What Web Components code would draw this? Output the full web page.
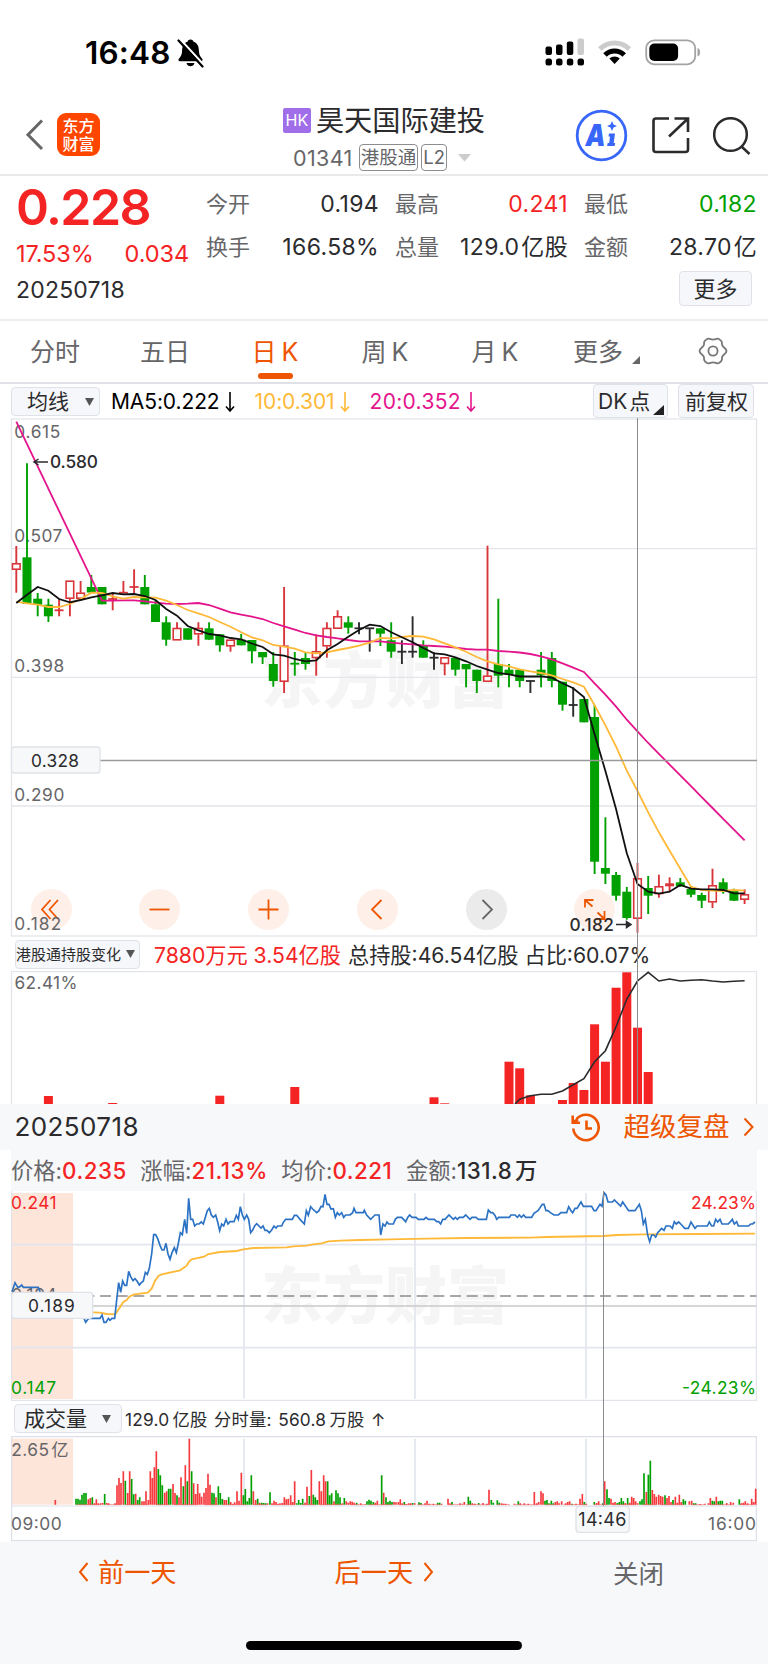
<!DOCTYPE html>
<html lang="zh-CN">
<head>
<meta charset="utf-8">
<meta name="viewport" content="width=device-width">
<title>昊天国际建投 01341</title>
<style>
  body {
    margin: 0;
    width: 768px;
    height: 1665px;
    overflow: hidden;
    background: #fff;
    color: #2b2b2e;
    font-family: Inter, "Noto Sans CJK SC", sans-serif;
    font-size: 22px;
    --up: #f42424;
    --down: #00a000;
    --accent: #ee5500;
    --muted: #666669;
    --sheet: #f7f8fa;
  }
</style>
</head>
<body>
<stock-app></stock-app>

<script>
// Small helper: one template per element, cloned in its shadow root
function element(name, html, setup) {
  const template = document.createElement('template');
  template.innerHTML = html;
  customElements.define(name, class extends HTMLElement {
    connectedCallback() {
      if (this.shadowRoot) return;
      this.attachShadow({ mode: 'open' }).appendChild(template.content.cloneNode(true));
      if (setup) setup(this, this.shadowRoot);
    }
  });
}

/* ---------- status bar ---------- */
element('status-bar', `
  <style>
    :host { display: flex; height: 104px; box-sizing: border-box; padding: 1px 67px 0 85px; justify-content: space-between; align-items: center; color: #000; }
    .side { display: flex; align-items: center; }
    .time { font-size: 31.500px; font-weight: 600; letter-spacing: .2px; line-height: 40px; margin-right: 6px; }
    svg { display: block; }
  </style>
  <div class="side">
    <span class="time">16:48</span>
    <svg width="27" height="30" viewBox="0 0 27 30">
      <path d="M13.5 1.5c2 0 2.6 1 3 2.2 4 1.3 5.3 4.7 5.4 9 .1 4 1.500 6 3.400 8.300.8 1-.1 2.200-1.100 2.200H2.800c-1 0-1.900-1.200-1.100-2.200 2-2.400 3.300-4.300 3.400-8.300.1-4.300 1.500-7.700 5.400-9 .4-1.200 1-2.200 3-2.200z M9.500 25h8c-.7 2.200-2 3.200-4 3.200s-3.300-1-4-3.200z"/>
      <path d="M3.400 1.500l24 26" stroke="#fff" stroke-width="2.200"/>
      <path d="M1.500 2.500l24 26" stroke="#000" stroke-width="2.200" stroke-linecap="round"/>
    </svg>
  </div>
  <svg width="156" height="30" viewBox="545 37.500 156 30">
    <g>
      <rect x="545.500" y="46" width="6.500" height="8.500" rx="2"/><rect x="556" y="44" width="6.500" height="10.500" rx="2"/>
      <rect x="566.800" y="41" width="6.500" height="13.500" rx="2"/><rect x="577.500" y="38" width="6.500" height="16.500" rx="2" fill="#ccc"/>
      <rect x="545.500" y="58" width="6.500" height="7" rx="2.500"/><rect x="556" y="58" width="6.500" height="7" rx="2.500"/>
      <rect x="566.800" y="58" width="6.500" height="7" rx="2.500"/><rect x="577.500" y="58" width="6.500" height="7" rx="2.500"/>
    </g>
    <g fill="none" stroke-width="5">
      <path d="M599.800 48.500a21 21 0 0 1 29.600 0" stroke="#ccc"/>
      <path d="M605 54.500a13.500 13.500 0 0 1 19.200 0" stroke="#000"/>
    </g>
    <path d="M614.600 63.500l-5.200-5.400a7.500 7.500 0 0 1 10.400 0z"/>
    <rect x="646.200" y="39.800" width="49" height="24" rx="8" fill="none" stroke="#a3a3a3" stroke-width="1.800"/>
    <rect x="649.300" y="43" width="28.800" height="17.500" rx="5"/>
    <path d="M697.500 47.500c3.500 1 3.500 7.500 0 8.600z" fill="#a3a3a3"/>
  </svg>
`);

/* ---------- title bar ---------- */
element('stock-header', `
  <style>
    :host { display: grid; grid-template-columns: 1fr auto 1fr; height: 72px; box-sizing: border-box; border-bottom: 2px solid #e9e9eb; align-items: start; }
    svg { display: block; }
    .left { display: flex; align-items: center; padding: 9px 0 0 25px; gap: 13px; }
    .logo { width: 43px; height: 43px; border-radius: 9px; background: #ff4600; color: #fff; font: 500 16px/18px "Noto Sans CJK SC", sans-serif; text-align: center; padding-top: 3px; box-sizing: border-box; }
    .name { display: flex; align-items: center; gap: 5px; font-size: 28.200px; line-height: 34px; height: 33px; justify-content: center; }
    .hk { background: #a06ee8; color: #fff; font-size: 16px; line-height: 25px; width: 28px; text-align: center; border-radius: 2px; }
    .code { display: flex; align-items: center; justify-content: center; color: var(--muted); font-size: 21.500px; gap: 3px; height: 41px; letter-spacing: .4px; margin-left: -3px; }
    .code b { font-weight: 400; border: 1.500px solid #8d8d90; border-radius: 4px; font-size: 18.500px; line-height: 25px; padding: 0 1px; letter-spacing: 0; }
    .code b:first-of-type { margin-left: 3px; }
    .code svg { margin-left: 8px; }
    .right { display: flex; justify-content: flex-end; padding: 5px 17px 0 0; align-items: center; gap: 24px; }
    .right svg:last-child { margin-left: -1px; }
  </style>
  <div class="left">
    <svg width="19" height="32" viewBox="0 0 19 32"><path d="M17 1.500L3 15.700 17 30" fill="none" stroke="#666" stroke-width="3"/></svg>
    <div class="logo">东方<br>财富</div>
  </div>
  <div>
    <div class="name"><span class="hk">HK</span><span>昊天国际建投</span></div>
    <div class="code"><span>01341</span><b>港股通</b><b>L2</b>
      <svg width="14" height="8"><path d="M0 0h13L6.500 7.500z" fill="#ccc"/></svg></div>
  </div>
  <div class="right">
    <svg width="53" height="53" viewBox="575.500 109 53 53">
      <circle cx="602" cy="135.500" r="24.300" fill="none" stroke="#3866f8" stroke-width="2.800"/>
      <text x="586" y="146" font-family="Inter" font-size="30" font-weight="900" font-style="italic" fill="#3866f8" textLength="20" lengthAdjust="spacingAndGlyphs">A</text>
      <path d="M612.500 121l1.500 3.500 3.500 1.500-3.500 1.500-1.500 3.500-1.500-3.500-3.500-1.500 3.500-1.500z" fill="#3866f8"/>
      <path d="M609.500 133.500h6l-1.300 9.500h1.500l-.6 3h-7.500l.6-3h1.500l.8-6.500h-1.500z" fill="#3866f8"/>
    </svg>
    <svg width="38" height="38" viewBox="651 117.500 38 38" fill="none" stroke="#2b2b2e" stroke-width="2.600">
      <path d="M668 119H655q-2.500 0-2.500 2.500v28.500q0 2.500 2.500 2.500h29.500q2.500 0 2.500-2.500V138.500M673.500 119H687v13.500M687 119l-19 18"/>
    </svg>
    <svg width="38" height="38" viewBox="713 116 38 38" fill="none" stroke="#2b2b2e" stroke-width="2.500">
      <circle cx="730.500" cy="133.500" r="16.300"/><path d="M741.500 145.500l8 7.500"/>
    </svg>
  </div>
`);

/* ---------- quote ---------- */
element('quote-cell', `
  <style>
    :host { display: flex; justify-content: space-between; line-height: 30px; font-size: 22px; white-space: nowrap; }
    .label { color: var(--muted); }
    .value { font-size: 23px; letter-spacing: .35px; word-spacing: -5px; margin-right: -1px; }
  </style>
  <span class="label"></span><span class="value"><slot></slot></span>
`, (host, root) => {
  root.querySelector('.label').textContent = host.getAttribute('label');
});

element('quote-panel', `
  <style>
    :host { display: flex; height: 145px; box-sizing: border-box; border-bottom: 2px solid #eeeef0; padding: 11px 12px 0 16px; }
    .main { width: 190px; box-sizing: border-box; padding-right: 17px; color: var(--up); }
    .price { font-size: 50px; line-height: 40px; font-weight: 600; letter-spacing: -1.600px; }
    .diff { display: flex; justify-content: space-between; font-size: 23.500px; line-height: 30px; margin-top: 12px; letter-spacing: -.1px; }
    .date { color: #2b2b2e; font-size: 23px; line-height: 30px; margin-top: 6px; letter-spacing: .2px; }
    .more { flex: 1; }
    .grid { display: grid; grid-template-columns: repeat(3, 172px); gap: 13px 17px; padding-top: 2px; }
    .up { color: var(--up); }
    .down { color: var(--down); }
    button { display: block; margin: 9px 4px 0 auto; width: 73px; height: 35px; box-sizing: border-box; border: 1.500px solid #dfe2e8; border-radius: 4px; background: #f6f7fa; font: inherit; color: inherit; line-height: 30px; padding: 0; }
  </style>
  <div class="main">
    <div class="price">0.228</div>
    <div class="diff"><span>17.53%</span><span>0.034</span></div>
    <div class="date">20250718</div>
  </div>
  <div class="more">
    <div class="grid">
      <quote-cell label="今开">0.194</quote-cell>
      <quote-cell label="最高"><span class="up">0.241</span></quote-cell>
      <quote-cell label="最低"><span class="down">0.182</span></quote-cell>
      <quote-cell label="换手">166.58%</quote-cell>
      <quote-cell label="总量">129.0 亿股</quote-cell>
      <quote-cell label="金额">28.70 亿</quote-cell>
    </div>
    <button>更多</button>
  </div>
`);

/* ---------- period tabs ---------- */
element('period-tab', `
  <style>
    :host { display: flex; flex: none; flex-direction: column; align-items: center; width: 110px; color: var(--muted); font-size: 25px; word-spacing: -2px; line-height: 36px; padding-top: 13px; box-sizing: border-box; }
    :host([active]) { color: var(--accent); }
    :host([active])::after { content: ""; width: 35px; height: 6px; border-radius: 3px; background: var(--accent); margin-top: 3px; }
  </style>
  <span><slot></slot></span>
`);

element('period-tabs', `
  <style>
    :host { display: flex; height: 63px; box-sizing: border-box; border-bottom: 2px solid #dfe1e7; }
    .corner { display: inline-block; margin-left: 9px; vertical-align: -3px; }
    .gear { width: 105px; padding: 16px 0 0 35px; box-sizing: border-box; }
    period-tab:last-of-type { width: 113px; }
  </style>
  <period-tab>分时</period-tab>
  <period-tab>五日</period-tab>
  <period-tab active>日 K</period-tab>
  <period-tab>周 K</period-tab>
  <period-tab>月 K</period-tab>
  <period-tab>更多<svg class="corner" width="8" height="8"><path d="M8 0v8H0z" fill="#666"/></svg></period-tab>
  <div class="gear">
    <svg width="30" height="28" viewBox="0 0 30 28" fill="none" stroke="#77777a" stroke-width="1.800">
      <path d="M8.800 2.200C10.500 .6 11.500 2.600 15 2.600S19.500 .6 21.200 2.200C24 4 24 5 24 7.500S28.500 11 28.500 14 24 18 24 20.500 24 24 21.200 25.800C19.500 27.400 18.500 25.400 15 25.400S10.500 27.400 8.800 25.800C6 24 6 23 6 20.500S1.500 17 1.500 14 6 10 6 7.500 6 4 8.800 2.200Z"/>
      <circle cx="15" cy="14" r="4.600"/>
    </svg>
  </div>
`);

/* ---------- small grey chips ---------- */
element('tool-chip', `
  <style>
    :host { display: flex; align-items: center; justify-content: space-between; box-sizing: border-box; border: 1.500px solid #dfe2e8; border-radius: 4px; background: #f6f7fa; white-space: nowrap; font-size: 21px; line-height: 1; }
    svg { display: none; }
    :host([arrow]) svg { display: block; }
  </style>
  <slot></slot><svg width="9" height="8"><path d="M0 0h9L4.500 8z" fill="#555"/></svg>
`);

element('ma-bar', `
  <style>
    :host { display: flex; align-items: flex-start; height: 34px; padding: 0 14px 0 11px; font-size: 21px; }
    .first { width: 89px; height: 29px; margin-top: 3px; padding: 0 5px 0 15px; }
    .ma { line-height: 35px; margin-left: 11px; display: flex; align-items: center; gap: 5px; letter-spacing: -.1px; }
    .ma + .ma { margin-left: 20px; }
    .ma + .ma + .ma { letter-spacing: .3px; }
    .fill { flex: 1; }
    .dk { width: 75px; height: 34px; padding: 0 3px 0 4px; word-spacing: -4px; }
    .fq { width: 76px; height: 34px; padding: 0 6px; margin-left: 10px; }
    .corner { align-self: flex-end; margin-bottom: 2px; }
  </style>
  <tool-chip class="first" arrow>均线</tool-chip>
  <span class="ma" style="color:#000">MA5:0.222<svg width="10" height="20" viewBox="0 0 10 20" fill="none" stroke="currentColor" stroke-width="1.600"><path d="M5 0v19M1 14.500l4 4.500 4-4.500"/></svg></span>
  <span class="ma" style="color:#ffb938">10:0.301<svg width="10" height="20" viewBox="0 0 10 20" fill="none" stroke="currentColor" stroke-width="1.600"><path d="M5 0v19M1 14.500l4 4.500 4-4.500"/></svg></span>
  <span class="ma" style="color:#e4158c">20:0.352<svg width="10" height="20" viewBox="0 0 10 20" fill="none" stroke="currentColor" stroke-width="1.600"><path d="M5 0v19M1 14.500l4 4.500 4-4.500"/></svg></span>
  <span class="fill"></span>
  <tool-chip class="dk"><span>DK 点</span><svg class="corner" width="11" height="10"><path d="M11 0v10H0z" fill="#222"/></svg></tool-chip>
  <tool-chip class="fq">前复权</tool-chip>
`);

/* ---------- round chart buttons ---------- */
element('round-button', `
  <style>
    :host { display: block; width: 41px; height: 41px; border-radius: 50%; background: #fef0e9; color: var(--accent); }
    :host([off]) { background: #ebebeb; color: var(--muted); }
    svg { display: block; }
  </style>
  <svg width="41" height="41" viewBox="-20.500 -20.500 41 41" fill="none" stroke="currentColor" stroke-width="1.800"><path/></svg>
`, (host, root) => {
  root.querySelector('path').setAttribute('d', host.getAttribute('icon'));
});

/* ---------- daily candles ---------- */
const STEP = 10.71, X0 = 16.3;
const cx = i => +(X0 + STEP * i).toFixed(1);
const polyline = (ys, from = 0) => ys.map((y, i) => cx(i + from) + ',' + y).join(' ');

// colour, high, body top, body bottom, low
const CANDLES = [
  'r 546 563.3 569.7 592.7', 'g 463.3 557.3 604 604', 'g 593 598.7 604.7 616.3', 'g 598.7 604.7 616.3 622', 'r 598.7 610.3 610.3 616.3',
  'r 580.7 580.7 598.7 616.3', 'r 581 592.7 598.7 598.7', 'g 575 587 592.5 592.7', 'g 587 587 604.3 604.3', 'r 593 599 599 610.3',
  'r 581 592.7 592.7 593.3', 'r 569.3 587 587 593', 'g 575 587 604.3 604.3', 'g 600 604.3 622 622', 'g 616.3 622.3 639.7 645.7',
  'r 622.3 628 640.3 640.3', 'g 628.3 628.3 639.7 639.7', 'r 622.3 628 634.3 645.7', 'g 622.3 628.3 639.7 639.7', 'g 634.3 634.3 645.3 651.7',
  'r 639.7 639.7 646.3 651.7', 'g 634 639.7 645.3 645.3', 'g 640 640 651.3 663.3', 'g 652 652 657.3 664', 'g 652 664 681 686.7',
  'r 587 645.7 681.7 693', 'g 652 663.7 663.7 675.7', 'g 653 658 664 669.7', 'r 634.3 651.3 658 675.7', 'r 622.3 628 646.3 657.7',
  'r 610.3 616.3 628.7 628.7', 'g 616.3 622.3 627.7 633.7', 'k 622.3 628.3 628.3 634.3', 'k 628.3 628.3 628.3 651.7', 'g 628.3 628.3 633.7 646',
  'g 622.3 640.3 651.7 657.7', 'k 640.3 651.7 651.7 664', 'k 616.3 651.7 651.7 657.7', 'g 640.3 646 657.7 657.7', 'k 652.3 657.7 657.7 669.7',
  'r 657.3 657.3 664 675.3', 'g 658 658 669.7 675.7', 'g 664 664 669.3 687.3', 'g 669.7 669.7 681 693', 'r 545.7 675.7 681.7 681.7',
  'g 598.7 664 675.7 687.3', 'g 664 669.7 674.7 687.3', 'g 669.7 669.7 681 687.3', 'k 681 681 681 693', 'g 652 669.7 675.3 687.3',
  'g 652 658 681 687.3', 'g 681.7 681.7 704.7 710.7', 'k 687.3 705 705 716.7', 'g 699 699 722.3 722.3', 'g 705 717 861.7 874',
  'g 817.3 868 873.7 884', 'g 872 875 895.7 900.7', 'g 887 891.7 918 919.7', 'r 863 878.3 918.7 932.7', 'g 876 888 895.7 914',
  'r 874.7 886.3 894 897.7', 'r 877.3 884.8 884.8 892', 'g 878 882.3 886.3 887', 'g 886 889 894.7 897.3', 'g 892.7 895 900.7 908',
  'r 868.7 885.3 902.3 908', 'g 878.3 882.3 890 893.7', 'g 888.7 890 900.7 901', 'r 889.3 894.3 899.7 904'
];
const MA5 = [603, 594.7, 587, 590.7, 599, 602.3, 600, 597.3, 595.3, 593, 594.3, 594, 596, 600, 609, 615.7, 626, 630.3, 634, 635.3, 638, 639.3, 643.5, 647, 654.3, 655.7, 659, 661.3, 660.3, 650.3, 644, 636.7, 630, 624.7, 626, 632.3, 637.3, 642.3, 648, 653.3, 654.3, 657.3, 661.3, 666, 669.7, 673, 674.3, 676.5, 676.5, 676.3, 677.7, 683.3, 688.3, 697, 734.3, 771, 809.3, 853.3, 884, 891.7, 893.7, 891.7, 885, 888.7, 889.3, 889.3, 890, 893.3, 893.3];
const MA10 = [601.7, 603.3, 604.7, 607, 607, 604, 599, 592.7, 593, 596.3, 598.7, 597, 597.3, 597.7, 600.7, 605, 610, 613.3, 617, 622, 626.7, 632.3, 637.3, 640.3, 645, 646.7, 648.7, 652.3, 653.3, 652.3, 650, 648, 645.7, 642.7, 638, 638.3, 637, 636, 636.7, 639.3, 643.3, 647.3, 651.7, 657, 661.3, 664.3, 666.3, 669.3, 671.3, 673, 675.3, 679, 682.3, 686.7, 705.3, 725.3, 746.7, 770.7, 791, 812.3, 832.3, 850.7, 868.7, 886.7, 890, 890.7, 891, 890, 890.7];
const MA20 = [600.7, 600.7, 600.3, 600.3, 601.3, 602.7, 603.7, 604, 603.7, 603, 605, 608.7, 612.3, 614.7, 616.7, 619, 623, 626.3, 629.7, 633, 635.3, 637, 638.3, 640, 641.3, 641.3, 641.3, 642.7, 643.7, 644.3, 645.3, 646, 646.7, 647.7, 649, 649.7, 649.7, 651, 651.7, 652.5, 654, 656.3, 659.3, 663.3, 667.7, 672, 683.3, 694.7, 706.7, 719.7, 731.3, 743, 753.8, 764.6, 775.4, 786.2, 797.1, 808, 818.8, 829.6, 840.3];

function candle(row, i) {
  const [c, hi, top, bot, lo] = row.split(' ').map((v, n) => n ? +v : v);
  const color = { r: '#d9363b', g: '#00a000', k: '#2b2b2e' }[c];
  const x = cx(i);
  const wick = (a, b) => b > a ? `<path d="M${x} ${a}V${b}" stroke="${color}" stroke-width="1.9"/>` : '';
  if (top === bot) {
    return wick(hi, lo) + `<path d="M${x - 4.5} ${top}h9" stroke="${color}" stroke-width="${i === 61 ? 3 : 1.8}"/>`;
  }
  if (c === 'r') {
    return wick(hi, top) + wick(bot, lo) +
      `<rect x="${x - 3.8}" y="${top + .5}" width="7.6" height="${bot - top - 1}" fill="#fff" stroke="${color}" stroke-width="1.6"/>`;
  }
  return wick(hi, lo) + `<rect x="${x - 4.5}" y="${top}" width="9" height="${bot - top}" fill="${color}"/>`;
}

element('candle-chart', `
  <style>
    :host { display: block; position: relative; height: 519px; }
    svg { display: block; position: relative; }
    .buttons { position: absolute; left: 30.500px; top: 471px; width: 585px; display: flex; justify-content: space-between; }
    text { font-size: 17.300px; fill: var(--muted); }
    .mark { fill: #2b2b2e; font-weight: 500; }
    .logo { font-size: 61px; font-weight: 900; fill: #f5f5f6; }
  </style>
  <div class="buttons">
    <round-button icon="M-1-9.500L-9.500 0L-1 9.500M6.500-9.500L-2 0L6.500 9.500"></round-button>
    <round-button icon="M-10 0H10"></round-button>
    <round-button icon="M-10 0H10M0-10V10"></round-button>
    <round-button icon="M4-9.500L-5.500 0L4 9.500"></round-button>
    <round-button off icon="M-4-9.500L5.500 0L-4 9.500"></round-button>
    <round-button icon="M-9.500-2V-9.500H-1M-9.500-9.500L-2-3M3 3L10 9.500M1.500 9.500H10V1.500"></round-button>
  </div>
  <svg width="768" height="519" viewBox="0 418 768 519">
    <text class="logo" x="261" y="703" textLength="248">东方财富</text>
    <g stroke="#e3e5ea" stroke-width="1.300" fill="none">
      <rect x="11.500" y="419" width="745" height="517"/>
      <path d="M11.500 548.700h745M11.500 677.300h745M11.500 806h745"/>
    </g>
    <text x="14.300" y="438" textLength="46">0.615</text><text x="14.300" y="542" textLength="48">0.507</text>
    <text x="14.300" y="671.500" textLength="50">0.398</text><text x="14.300" y="800.500" textLength="50">0.290</text>
    <text x="14.300" y="930" textLength="47">0.182</text>
    <g id="candles"></g>
    <g fill="none" stroke-width="1.800">
      <polyline id="ma20" stroke="#e4158c"/><polyline id="ma10" stroke="#ffb938"/><polyline id="ma5" stroke="#111"/>
    </g>
    <path d="M11 760.500h746" stroke="#9a9a9a" stroke-width="1.300"/>
    <rect x="11.500" y="747" width="88.500" height="26" rx="3" fill="#f7f8fa" stroke="#dfe2e8" stroke-width="1.300"/>
    <text x="31" y="767" textLength="48" style="fill:#2b2b2e">0.328</text>
    <path d="M34 462h14M38.500 459l-4.500 3 4.500 3" stroke="#2b2b2e" stroke-width="1.500" fill="none"/>
    <text class="mark" x="50" y="468.300" textLength="48">0.580</text>
    <text class="mark" x="569.500" y="931" textLength="44.500">0.182</text>
    <path d="M616 924.500h14M626.500 921.500l4.500 3-4.500 3z" stroke="#2b2b2e" stroke-width="1.500" fill="#2b2b2e"/>
  </svg>
`, (host, root) => {
  root.getElementById('candles').innerHTML = CANDLES.map(candle).join('');
  root.getElementById('ma5').setAttribute('points', polyline(MA5));
  root.getElementById('ma10').setAttribute('points', polyline(MA10));
  root.getElementById('ma20').setAttribute('points', cx(0) + ',421.7 ' + polyline(MA20, 8));
});

/* ---------- holdings ---------- */
const HOLD = { 3: 1096, 9: 1103, 19: 1095.7, 26: 1087, 39: 1097.3, 40: 1103.3, 46: 1061.7, 47: 1068.3, 48: 1095.3, 51: 1100, 52: 1083, 53: 1090, 54: 1024.3, 55: 1061.7, 56: 987.7, 57: 972.3, 58: 1027.7, 59: 1072 };
const RATIO = [1099.3, 1095.7, 1094.3, 1094.3, 1091, 1084.7, 1078.7, 1061.7, 1050.7, 1026.7, 999, 981, 972.3, 981, 979, 981, 980.3, 979.7, 981, 982, 981.3, 980.7];

element('hold-panel', `
  <style>
    :host { display: block; }
    .bar { display: flex; align-items: center; height: 34px; padding-left: 15px; font-size: 21.200px; white-space: nowrap; }
    tool-chip { width: 125px; height: 29px; font-size: 15px; padding: 0 4px 0 0; }
    .bar span { position: relative; top: -1px; }
    .up { color: var(--up); margin: 0 7px 0 14px; }
    svg { display: block; }
    text { font-size: 17.300px; fill: var(--muted); }
  </style>
  <div class="bar">
    <tool-chip arrow>港股通持股变化</tool-chip>
    <span class="up">7880万元 3.54亿股</span>
    <span>总持股:46.54亿股 占比:60.07%</span>
  </div>
  <svg width="768" height="133" viewBox="0 971 768 133">
    <path d="M11.500 1104V971.700h745V1104" fill="none" stroke="#e3e5ea" stroke-width="1.300"/>
    <text x="14.500" y="989" textLength="63">62.41%</text>
    <g id="bars" fill="#f42424"></g>
    <polyline id="ratio" fill="none" stroke="#2b2b2e" stroke-width="1.600"/>
  </svg>
`, (host, root) => {
  root.getElementById('bars').innerHTML = Object.entries(HOLD)
    .map(([i, y]) => `<rect x="${cx(i) - 4.5}" y="${y}" width="9" height="${1104 - y}"/>`).join('');
  root.getElementById('ratio').setAttribute('points', '515,1104 ' + polyline(RATIO, 47));
});

/* ---------- replay sheet ---------- */
element('replay-head', `
  <style>
    :host { display: block; }
    .title { display: flex; align-items: center; height: 46px; background: var(--sheet); padding: 0 14.500px; font-size: 26px; line-height: 42px; }
    .title b { flex: 1; font-weight: 400; letter-spacing: .4px; }
    .link { color: var(--accent); font-size: 26.500px; margin: -2px 13px 0 24px; }
    .info { display: flex; height: 41px; align-items: center; margin: 0 11px; background: var(--sheet); font-size: 22.300px; line-height: 37px; color: var(--muted); white-space: nowrap; }
    .info span { margin-right: 13.500px; word-spacing: -4px; }
    i { font-style: normal; color: var(--up); font-weight: 500; letter-spacing: .55px; }
    i.flat { color: #2b2b2e; }
  </style>
  <div class="title">
    <b>20250718</b>
    <svg width="29" height="29" viewBox="-15 -14.500 29 29" fill="none" stroke="#ee5500" stroke-width="2.600">
      <path d="M-9.600-8.400A12.700 12.700 0 1 1-12.700 1M-13.300-12V-4.800H-6M-13-5.500L-8-8M0.500-7V1H6"/>
    </svg>
    <span class="link">超级复盘</span>
    <svg width="11" height="20" viewBox="0 0 11 20" fill="none" stroke="#ee5500" stroke-width="2"><path d="M1.500 1.500L9.500 10l-8 8.500"/></svg>
  </div>
  <div class="info">
    <span>价格:<i>0.235</i></span><span>涨幅:<i>21.13%</i></span><span>均价:<i>0.221</i></span><span>金额:<i class="flat">131.8 万</i></span>
  </div>
`);

// Intraday drawings use three units per pixel
const PRICE_OPEN = '36,575 45,548 53,562 60,560 65,555 70,562 115,562 122,580';
const PRICE = `242,655 250,650 257,667 266,655 300,655 306,645 312,667 318,667 325,655 330,661 336,655 344,655 350,600 356,548 362,577 368,543 374,556 380,556 386,514 392,530 399,542 405,536 411,543 418,555 424,548 430,543 436,517 442,523 448,505 455,462 461,404 467,404 473,416 480,436 486,450 492,450 498,430 504,462 510,478 516,458 523,443 529,458 535,430 541,398 547,404 554,358 560,400 566,295 572,358 578,358 584,378 590,372 597,372 604,366 610,372 616,352 622,332 628,325 634,345 640,352 647,345 653,366 659,392 665,372 671,378 678,358 684,372 690,365 702,365 709,346 715,358 721,320 727,345 733,358 740,345 746,358 752,398 758,390 764,378 770,371 777,378 783,384 789,378 795,391 801,391 808,398 815,390 822,378 828,384 833,378 845,378 850,367 857,358 877,358 883,346 890,346 900,358 913,372 919,332 925,346 932,320 938,327 950,338 957,332 963,319 969,320 975,283 981,313 987,313 993,327 1000,326 1006,352 1012,338 1018,345 1025,338 1031,352 1037,345 1050,345 1058,338 1062,325 1068,338 1090,338 1093,331 1100,345 1112,358 1125,345 1137,345 1142,405 1149,372 1155,378 1161,366 1166,372 1180,372 1186,358 1192,352 1205,352 1217,365 1223,352 1229,345 1236,352 1248,352 1255,358 1272,358 1278,352 1285,358 1303,358 1310,365 1316,365 1322,372 1328,358 1335,358 1347,345 1360,358 1366,352 1372,358 1378,352 1390,352 1397,345 1410,358 1416,352 1428,352 1435,358 1459,358 1465,330 1472,338 1478,338 1485,346 1490,358 1496,352 1528,352 1533,345 1545,345 1552,352 1558,345 1564,352 1571,345 1577,352 1595,352 1602,340 1614,332 1627,313 1632,313 1638,332 1644,332 1651,338 1662,345 1675,345 1683,338 1700,338 1706,320 1713,332 1718,338 1725,325 1731,325 1743,306 1750,319 1775,319 1782,332 1788,332 1800,313 1806,319 1812,278 1818,285 1824,306 1837,306 1843,300 1862,318 1868,306 1886,332 1905,332 1918,313 1924,332 1930,372 1936,358 1943,405 1949,425 1955,405 1961,405 1967,411 1973,398 1985,385 1992,391 1998,378 2010,378 2017,385 2023,365 2029,372 2036,366 2048,378 2054,385 2065,385 2073,366 2085,385 2091,378 2122,378 2128,366 2135,378 2141,378 2147,358 2153,366 2160,358 2166,372 2185,372 2197,358 2203,372 2210,365 2215,378 2246,378 2252,372 2258,372 2265,366`;
const AVERAGE = '278,637 300,638 320,642 346,643 360,622 370,606 380,600 388,590 400,584 443,578 455,566 465,543 475,528 485,523 540,511 560,497 567,485 575,478 612,470 625,462 660,456 710,453 730,448 760,444 860,442 880,439 920,437 940,433 965,430 985,424 1020,422 1080,420 1170,418 1280,416 1400,414 1590,413 1640,411 1810,408 1850,405 1930,403 2100,402 2265,401';

element('minute-chart', `
  <style>
    :host { display: block; height: 210px; }
    svg { display: block; }
    text { font-size: 52px; fill: var(--muted); }
    .up { fill: var(--up); }
    .down { fill: var(--down); }
    .logo { font-size: 186px; font-weight: 900; fill: #f5f5f6; }
  </style>
  <svg width="768" height="210" viewBox="0 273 2304 630">
    <rect x="36" y="279" width="183" height="618" fill="#fde5da"/>
    <text class="logo" x="783" y="658" textLength="744">东方财富</text>
    <g stroke="#e3e5ee" stroke-width="5" fill="none">
      <path d="M732 279V896M1245 279V896M1758 279V896M35 434H2269M35 743H2269"/>
      <path d="M35 273V903M2269 273V903M35 901H2269" stroke="#dcdfe8" stroke-width="3"/>
    </g>
    <path d="M250 588H2269" stroke="#8c8c8c" stroke-width="5" stroke-dasharray="33 17"/>
    <path d="M35 618H2269" stroke="#c9c9c9" stroke-width="5"/>
    <text x="34" y="603" textLength="136">0.194</text>
    <polyline points="${AVERAGE}" fill="none" stroke="#ffb938" stroke-width="5.500"/>
    <polyline points="${PRICE_OPEN}" fill="none" stroke="#2b72c4" stroke-width="5"/>
    <polyline points="${PRICE}" fill="none" stroke="#2b72c4" stroke-width="5"/>
    <text class="up" x="33" y="326" textLength="137">0.241</text>
    <text class="up" x="2073" y="326" textLength="195">24.23%</text>
    <text class="down" x="33" y="883" textLength="135">0.147</text>
    <text class="down" x="2046" y="883" textLength="222">-24.23%</text>
    <rect x="35" y="577" width="243" height="78" rx="9" fill="#f7f8fa" stroke="#dfe2e8" stroke-width="4"/>
    <text x="84" y="637" textLength="140" style="fill:#2b2b2e">0.189</text>
  </svg>
`);

// x and height pairs, in thirds of a pixel
const VOL_UP = '166 14 265 16 271 20 283 4 289 16 295 4 302 4 308 5 320 5 326 4 345 4 351 58 357 80 363 65 370 100 383 35 389 100 407 33 426 10 432 10 438 40 445 14 451 100 457 80 463 112 469 160 494 36 500 40 519 62 525 35 537 22 543 82 556 118 568 198 581 64 587 32 593 62 599 34 605 24 612 36 618 50 624 93 630 60 648 22 673 14 679 14 692 8 698 3 704 7 711 40 717 12 724 96 760 40 767 14 779 6 803 4 816 4 822 12 828 8 834 3 840 4 847 5 853 22 859 16 865 18 872 28 878 8 884 70 915 6 921 54 934 104 958 70 964 40 971 88 977 70 1002 10 1027 4 1039 10 1045 6 1051 10 1057 9 1063 6 1082 4 1095 2 1126 6 1132 12 1151 36 1182 8 1188 7 1195 8 1201 16 1207 4 1219 2 1226 4 1232 4 1244 4 1275 4 1281 12 1288 3 1300 3 1325 3 1344 18 1350 4 1380 4 1387 3 1393 8 1417 4 1424 3 1449 5 1461 3 1467 45 1505 4 1511 3 1517 3 1543 3 1561 4 1573 4 1585 3 1603 38 1610 4 1616 8 1623 40 1629 34 1666 8 1672 10 1678 4 1685 10 1697 4 1703 8 1709 10 1728 3 1740 18 1747 32 1759 3 1790 5 1796 10 1814 70 1833 18 1839 6 1845 8 1876 5 1889 6 1895 24 1901 20 1907 10 1913 4 1939 38 1957 44 1963 32 1969 24 1976 30 1982 26 1988 24 2001 20 2007 26 2013 8 2026 24 2032 6 2038 30 2044 8 2068 10 2075 12 2100 2 2115 3 2125 4 2131 20 2149 24 2180 5 2192 8 2200 6 2224 4 2230 6 2236 10 2243 4 2255 18 2261 8 2267 48';
const VOL_DOWN = '228 18 234 18 240 15 246 30 252 35 258 35 277 22 314 32 376 72 395 77 401 31 413 14 419 22 475 107 481 88 487 58 506 48 512 48 531 28 550 55 562 70 575 100 636 36 642 34 655 55 661 35 667 17 686 22 730 28 736 47 742 10 748 20 754 88 773 18 785 6 791 5 797 4 810 37 890 4 896 14 902 5 908 18 928 26 940 30 946 22 952 14 983 70 989 28 995 34 1008 43 1014 34 1020 22 1033 20 1070 6 1101 10 1107 15 1113 12 1120 8 1145 88 1158 22 1164 8 1170 12 1176 8 1213 8 1238 5 1257 7 1263 5 1313 6 1319 6 1356 8 1405 24 1411 12 1436 5 1474 14 1480 6 1492 13 1498 6 1555 10 1635 12 1641 14 1647 4 1654 12 1660 4 1716 3 1753 8 1783 8 1808 4 1821 46 1827 20 1852 5 1858 8 1864 20 1870 10 1883 20 1920 10 1926 16 1932 94 1945 90 1951 132 1995 28 2019 14 2050 16 2056 12 2081 4 2087 4 2137 12 2143 10 2155 10 2161 12 2167 12 2218 16';

function volumePath(data) {
  const v = data.split(' ').map(Number);
  let d = '';
  for (let i = 0; i < v.length; i += 2) d += `M${v[i]} 328v-${v[i + 1]}`;
  return d;
}

element('volume-panel', `
  <style>
    :host { display: block; }
    .bar { display: flex; align-items: center; height: 35px; padding-left: 14px; }
    tool-chip { width: 108px; height: 29px; padding: 0 10px 0 9px; }
    .bar span { font-size: 17.300px; margin-left: 3px; white-space: pre; word-spacing: -1.800px; letter-spacing: .2px; }
    svg { display: block; }
    text { font-size: 52px; fill: var(--muted); }
  </style>
  <div class="bar"><tool-chip arrow>成交量</tool-chip><span>129.0 亿股  分时量:  560.8 万股  ↑</span></div>
  <svg width="768" height="106" viewBox="0 122 2304 318">
    <rect x="36" y="130" width="183" height="198" fill="#fde5da"/>
    <path d="M732 130V328M1245 130V328M1758 130V328" stroke="#e3e5ee" stroke-width="5"/>
    <path d="M35 124H2269V436H35zM35 332H2269" fill="none" stroke="#dcdfe8" stroke-width="3.500"/>
    <path d="${volumePath(VOL_UP)}" stroke="#f6393c" stroke-width="5"/>
    <path d="${volumePath(VOL_DOWN)}" stroke="#00a000" stroke-width="5"/>
    <path d="M230 328H2269" stroke="#f6393c" stroke-width="1.500" stroke-dasharray="70 22 40 14"/>
    <text x="34" y="182" textLength="172" style="word-spacing:-10px">2.65 亿</text>
    <text x="33" y="405" textLength="152">09:00</text>
    <text x="2124" y="405" textLength="144">16:00</text>
    <rect x="1728" y="333" width="160" height="78" rx="10" fill="#f7f8fa" stroke="#dfe2e8" stroke-width="4"/>
    <text x="1735" y="392" textLength="144" style="fill:#2b2b2e;font-size:54px">14:46</text>
  </svg>
`);

/* ---------- footer ---------- */
element('day-nav', `
  <style>
    :host { display: flex; position: relative; height: 122px; margin-bottom: 1px; background: var(--sheet); color: var(--accent); font-size: 26.200px; padding: 9px 104px 0 78px; box-sizing: border-box; }
    span { display: flex; align-items: center; height: 40px; gap: 9px; }
    .next { margin: 0 auto 0 158px; gap: 10px; }
    svg { margin-top: 1px; }
    .close { color: var(--muted); font-size: 25.500px; }
    .home { position: absolute; left: 246px; bottom: 14px; width: 276px; height: 9px; border-radius: 5px; background: #000; }
  </style>
  <span><svg width="11" height="20" viewBox="0 0 11 20" fill="none" stroke="#ee5500" stroke-width="2"><path d="M9.500 1L2 10l7.500 9"/></svg>前一天</span>
  <span class="next">后一天<svg width="11" height="20" viewBox="0 0 11 20" fill="none" stroke="#ee5500" stroke-width="2"><path d="M1.500 1L9 10l-7.500 9"/></svg></span>
  <span class="close">关闭</span>
  <div class="home"></div>
`);

// Wraps stacked charts and draws one vertical crosshair over all of them
element('cross-hair', `
  <style>
    :host { display: block; position: relative; }
    .line { position: absolute; top: 0; width: 1px; background: #8c8c8c; pointer-events: none; }
  </style>
  <slot></slot><div class="line"></div>
`, (host, root) => {
  const line = root.querySelector('.line');
  line.style.left = host.getAttribute('x') + 'px';
  line.style.bottom = (host.getAttribute('stop') || 0) + 'px';
});

element('stock-app', `
  <style>
    :host { display: block; }
  </style>
  <status-bar></status-bar>
  <stock-header></stock-header>
  <quote-panel></quote-panel>
  <period-tabs></period-tabs>
  <ma-bar></ma-bar>
  <cross-hair x="637">
    <candle-chart></candle-chart>
    <hold-panel></hold-panel>
  </cross-hair>
  <replay-head></replay-head>
  <cross-hair x="603" stop="36">
    <minute-chart></minute-chart>
    <volume-panel></volume-panel>
  </cross-hair>
  <day-nav></day-nav>
`);
</script>
</body>
</html>
